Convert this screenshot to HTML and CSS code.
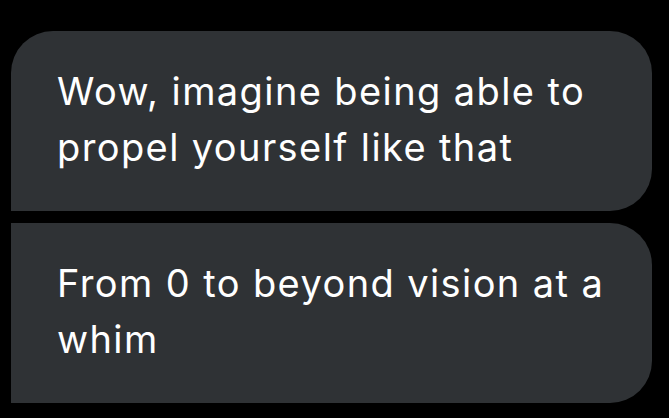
FILE: index.html
```html
<!DOCTYPE html>
<html lang="en">
<head>
<meta charset="utf-8">
<title>Messages</title>
<link rel="stylesheet" href="styles.css">
</head>
<body>
<div class="thread">
  <div class="bubble bubble-first">Wow, imagine being able to propel yourself like that</div>
  <div class="bubble bubble-middle">From 0 to beyond vision at a whim</div>
</div>
</body>
</html>
```
FILE: styles.css
```css
html, body {
  margin: 0;
  padding: 0;
  background: #000;
}
body {
  width: 669px;
  height: 418px;
  overflow: hidden;
  font-family: Inter, Roboto, sans-serif;
}
.thread {
  display: flex;
  flex-direction: column;
  gap: 12px;
  padding: 31px 0 0 11px;
}
.bubble {
  width: 641px;
  box-sizing: border-box;
  height: 180px;
  padding: 32px 24px 0 46px;
  background: #2f3235;
  color: #fff;
  font-size: 38px;
  line-height: 56px;
  letter-spacing: 1.4px;
}
.bubble-first {
  border-radius: 42px 42px 42px 0;
}
.bubble-middle {
  border-radius: 0 42px 42px 0;
}
```
